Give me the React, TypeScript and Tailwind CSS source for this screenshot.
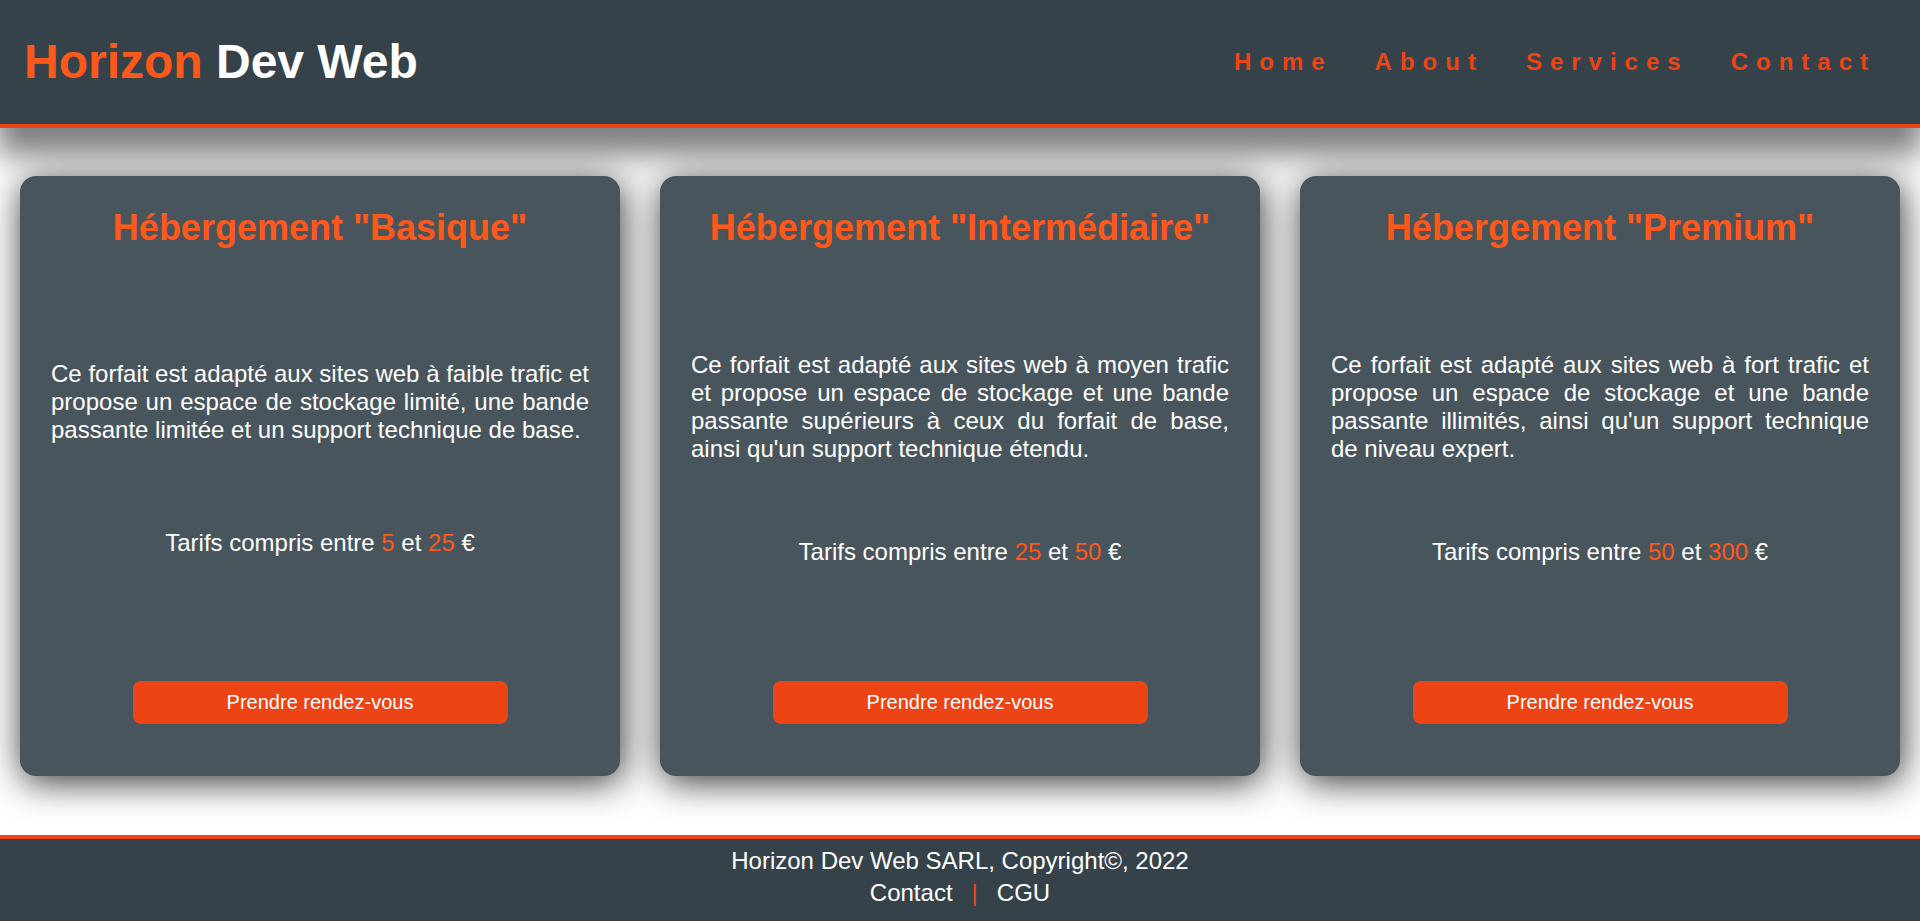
const offers = [
  {
    name: "Basique",
    text: "Ce forfait est adapté aux sites web à faible trafic et propose un espace de stockage limité, une bande passante limitée et un support technique de base.",
    min: 5,
    max: 25,
  },
  {
    name: "Intermédiaire",
    text: "Ce forfait est adapté aux sites web à moyen trafic et propose un espace de stockage et une bande passante supérieurs à ceux du forfait de base, ainsi qu'un support technique étendu.",
    min: 25,
    max: 50,
  },
  {
    name: "Premium",
    text: "Ce forfait est adapté aux sites web à fort trafic et propose un espace de stockage et une bande passante illimités, ainsi qu'un support technique de niveau expert.",
    min: 50,
    max: 300,
  },
];

const links = ["Home", "About", "Services", "Contact"];

export default function App() {
  return (
    <div className="flex min-h-screen flex-col overflow-x-hidden bg-white font-['Liberation_Sans',Arial,sans-serif] text-2xl leading-7 text-white">
      <header className="flex h-32 items-center justify-between border-b-4 border-[#ec4414] bg-[#36424a] px-6 shadow-[0_24px_28px_3px_rgba(0,0,0,0.5)]">
        <h1 className="text-5xl font-bold">
          <span className="text-[#ff581b]">Horizon</span> Dev Web
        </h1>
        <nav className="flex gap-[42px] pr-5 font-bold tracking-[8px] text-[#ec4414]">
          {links.map((link) => (
            <a key={link} href="#">
              {link}
            </a>
          ))}
        </nav>
      </header>

      <main className="grid flex-1 grid-cols-3 items-start gap-10 px-5 py-12">
        {offers.map((offer) => (
          <article
            key={offer.name}
            className="flex aspect-square flex-col items-center justify-between rounded-2xl bg-[#49555c] px-[31px] pt-[31px] pb-8 shadow-[2px_6px_36px_0_rgba(4,0,0,0.8)]"
          >
            <h2 className="mb-7 text-center text-4xl leading-[41px] font-bold text-[#ff581b]">
              Hébergement "{offer.name}"
            </h2>
            <p className="text-justify">{offer.text}</p>
            <p>
              Tarifs compris entre <span className="text-[#ff581b]">{offer.min}</span> et{" "}
              <span className="text-[#ff581b]">{offer.max}</span> €
            </p>
            <button
              type="button"
              className="mt-10 mb-5 w-[375px] max-w-full rounded-lg bg-[#ec4414] py-[10px] text-xl leading-[23px]"
            >
              Prendre rendez-vous
            </button>
          </article>
        ))}
      </main>

      <footer className="border-t-4 border-[#ec4414] bg-[#36424a] pt-2 pb-[14px] text-center">
        <p>Horizon Dev Web SARL, Copyright©, 2022</p>
        <p className="mt-1 flex justify-center gap-[19px]">
          <a href="#">Contact</a>
          <span className="text-[#ec4414]">|</span>
          <a href="#">CGU</a>
        </p>
      </footer>
    </div>
  );
}
